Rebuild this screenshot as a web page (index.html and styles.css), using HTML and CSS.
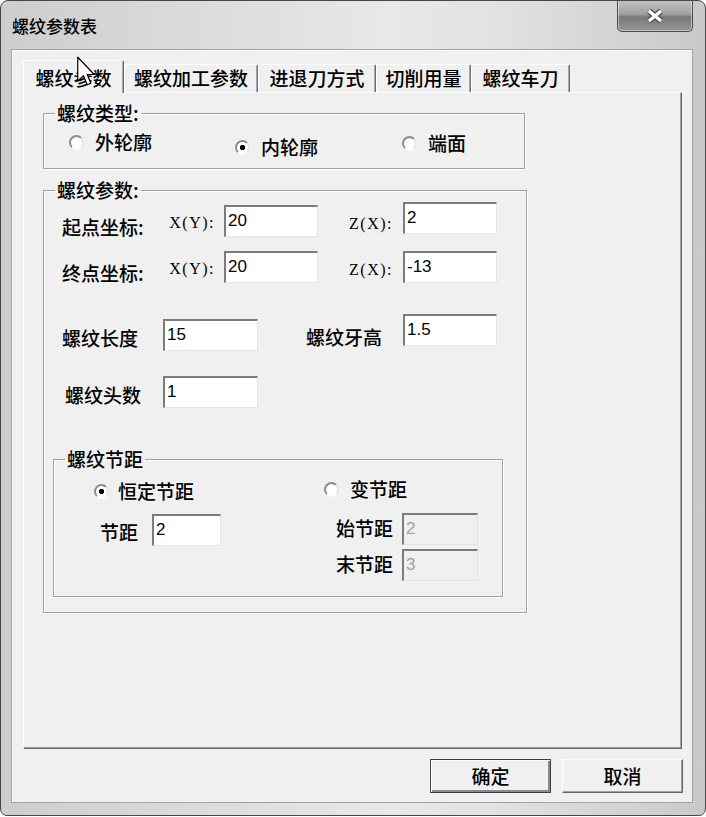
FILE: index.html
```html
<!DOCTYPE html>
<html lang="zh-CN">
<head>
    <meta charset="UTF-8">
    <title>螺纹参数表</title>
    <link rel="stylesheet" href="styles.css">
</head>
<body>
<div class="window">
    <div class="titlebar">
        <span class="title">螺纹参数表</span>
        <button class="close-btn" type="button" aria-label="关闭">
            <svg width="20" height="16" viewBox="0 0 20 16">
                <path d="M4 3 L16 13 M16 3 L4 13" stroke="#4a4a4a" stroke-width="6" fill="none"/>
                <path d="M4 3 L16 13 M16 3 L4 13" stroke="#fff" stroke-width="3.4" fill="none"/>
            </svg>
        </button>
    </div>
    <div class="client">
        <div class="tabs">
            <div class="tab active t1">螺纹参数</div>
            <div class="tab t2">螺纹加工参数</div>
            <div class="tab t3">进退刀方式</div>
            <div class="tab t4">切削用量</div>
            <div class="tab t5">螺纹车刀</div>
        </div>
        <div class="page">
            <fieldset class="group g-type">
                <legend>螺纹类型:</legend>
                <div class="type-opts">
                    <label class="opt o-out"><input type="radio" name="kind"> 外轮廓</label>
                    <label class="opt o-in"><input type="radio" name="kind" checked> 内轮廓</label>
                    <label class="opt o-end"><input type="radio" name="kind"> 端面</label>
                </div>
            </fieldset>

            <fieldset class="group g-param">
                <legend>螺纹参数:</legend>
                <div class="row coord-row first">
                    <span class="lbl">起点坐标:</span>
                    <span class="axis">X(Y):</span>
                    <input class="field" type="text" value="20">
                    <span class="axis zaxis">Z(X):</span>
                    <input class="field zfield up" type="text" value="2">
                </div>
                <div class="row coord-row second">
                    <span class="lbl">终点坐标:</span>
                    <span class="axis">X(Y):</span>
                    <input class="field" type="text" value="20">
                    <span class="axis zaxis">Z(X):</span>
                    <input class="field zfield" type="text" value="-13">
                </div>
                <div class="row size-row">
                    <span class="lbl len-lbl">螺纹长度</span>
                    <input class="field len-field" type="text" value="15">
                    <span class="lbl depth-lbl">螺纹牙高</span>
                    <input class="field" type="text" value="1.5">
                </div>
                <div class="row heads-row">
                    <span class="lbl heads-lbl">螺纹头数</span>
                    <input class="field" type="text" value="1">
                </div>

                <fieldset class="group g-pitch">
                    <legend>螺纹节距</legend>
                    <div class="pitch-cols">
                        <div class="pitch-col left">
                            <label class="opt o-fixed"><input type="radio" name="pitch" checked> 恒定节距</label>
                            <div class="pitch-row fixed-row">
                                <span class="plbl short">节距</span>
                                <input class="field small" type="text" value="2">
                            </div>
                        </div>
                        <div class="pitch-col right">
                            <label class="opt o-var"><input type="radio" name="pitch"> 变节距</label>
                            <div class="pitch-row var-row">
                                <span class="plbl">始节距</span>
                                <input class="field small wide" type="text" value="2" disabled>
                            </div>
                            <div class="pitch-row var-row last">
                                <span class="plbl">末节距</span>
                                <input class="field small wide" type="text" value="3" disabled>
                            </div>
                        </div>
                    </div>
                </fieldset>
            </fieldset>
        </div>
        <div class="actions">
            <button class="btn default" type="button">确定</button>
            <button class="btn" type="button">取消</button>
        </div>
    </div>
    <svg class="cursor" width="18" height="31" viewBox="0 0 12 20">
        <polygon points="0.5,0.5 0.5,16.5 4.3,12.8 6.8,18.8 9.2,17.8 6.8,12 11.5,12" fill="#fff" stroke="#000" stroke-width="0.8" stroke-linejoin="round"/>
    </svg>
</div>
</body>
</html>
```

FILE: styles.css
```css
body {
    margin: 0;
    background: #fff;
    font-family: "Noto Sans CJK SC", sans-serif;
    font-size: 19px;
    font-weight: 500;
    color: #000;
}
.window {
    position: relative;
    width: 706px;
    height: 816px;
    box-sizing: border-box;
    border: 1px solid #474747;
    border-radius: 8px 8px 7px 7px;
    padding: 0 12px 12px 10px;
    background: linear-gradient(to right, #cdcdcd, #dadada 25%, #e8e8e8 55%, #e2e2e2 70%, #d2d2d2 90%, #c9c9c9);
    display: flex;
    flex-direction: column;
    overflow: hidden;
}
.titlebar {
    height: 48px;
    flex-shrink: 0;
    display: flex;
    justify-content: space-between;
    align-items: flex-start;
}
.title {
    margin: 15px 0 0 1px;
    font-size: 17px;
    line-height: 20px;
}
.close-btn {
    width: 76px;
    height: 32px;
    margin: -1px 0 0 0;
    padding: 0;
    border: 1px solid #4c4c4c;
    border-top: none;
    border-radius: 0 0 5px 5px;
    background: linear-gradient(to bottom, #c4c4c4, #a0a0a0 45%, #787878 55%, #959595);
    box-shadow: inset 0 0 0 1px rgba(255,255,255,0.45);
    display: flex;
    align-items: center;
    justify-content: center;
}
.client {
    flex: 1;
    background: #f0f0f0;
    border: 1px solid #a3a3a3;
    box-shadow: inset 1px 1px 0 #fafafa;
    display: flex;
    flex-direction: column;
}
.tabs {
    display: flex;
    align-items: flex-end;
    height: 32px;
    margin: 10px 0 0 11px;
    position: relative;
    z-index: 1;
}
.tab {
    height: 28px;
    box-sizing: border-box;
    border-top: 1px solid #fff;
    border-left: 1px solid #fff;
    border-right: 1px solid #6e6e6e;
    box-shadow: inset -1px 0 0 #a8a8a8;
    border-radius: 2px 2px 0 0;
    text-align: center;
    line-height: 26px;
    background: #f0f0f0;
}
.tab.active {
    height: 33px;
    margin-bottom: -1px;
    padding-top: 4px;
}
.t1 { width: 101px; }
.t2 { width: 134px; }
.t3 { width: 118px; }
.t4 { width: 95px; }
.t5 { width: 99px; }
.page {
    flex: 1;
    margin: 0 11px 0 11px;
    border-top: 1px solid #fff;
    border-left: 1px solid #fff;
    border-right: 1px solid #a0a0a0;
    border-bottom: 1px solid #a0a0a0;
    box-shadow: 1px 1px 0 #696969;
}

/* group boxes */
.group {
    margin: 0;
    padding: 0;
    min-width: 0;
    box-sizing: border-box;
    border: 1px solid #a0a0a0;
    box-shadow: 1px 1px 0 #fff, inset 1px 1px 0 #fff;
}
.group legend {
    padding: 0 2px;
    margin-left: 11px;
    line-height: 20px;
    font-size: 19px;
}
.g-type {
    width: 482px;
    margin: 10px 0 0 19px;
}
.g-param {
    width: 484px;
    margin: 11px 0 0 19px;
    padding-bottom: 15px;
}
.g-pitch {
    width: 450px;
    margin: 41px 0 0 9px;
    padding-bottom: 15px;
}

/* radios */
.opt {
    display: flex;
    align-items: center;
    gap: 11px;
    line-height: 20px;
}
.opt input {
    appearance: none;
    -webkit-appearance: none;
    width: 15px;
    height: 15px;
    margin: 0;
    box-sizing: border-box;
    border-radius: 50%;
    border: 2px solid;
    border-color: #8c8c8c #e6e6e6 #fbfbfb #8c8c8c;
    background: radial-gradient(circle at 60% 60%, #fff 55%, #e8e8e8);
}
.opt input:checked {
    background: radial-gradient(circle, #000 0 2.4px, #fff 3px);
}
.type-opts {
    display: grid;
    grid-template-columns: 166px 167px auto;
    align-items: start;
    padding-left: 25px;
    height: 45px;
}
.o-out { margin-top: 9px; }
.o-in { margin-top: 14px; }
.o-end { margin-top: 10px; }

/* parameter rows */
.row {
    display: flex;
    align-items: flex-start;
    padding-left: 18px;
}
.lbl {
    line-height: 20px;
}
.coord-row .lbl {
    width: 104px;
    margin-top: 12px;
}
.coord-row.first { margin-top: 5px; }
.coord-row.second { margin-top: 14px; }
.axis {
    width: 58px;
    box-sizing: border-box;
    padding-right: 9px;
    text-align: right;
    font-family: "Liberation Serif", serif;
    font-size: 16px;
    font-weight: 400;
    letter-spacing: 1.5px;
    line-height: 18px;
    margin-top: 9px;
}
.axis.zaxis {
    width: 85px;
    padding-right: 10px;
    margin-top: 10px;
}
.field {
    width: 94px;
    height: 32px;
    box-sizing: border-box;
    margin: 0;
    padding: 0 2px 2px 2px;
    border-style: solid;
    border-width: 2px 1px 1px 2px;
    border-color: #7c7c7c #e4e4e4 #e4e4e4 #7c7c7c;
    background: #fff;
    font-family: "Liberation Sans", sans-serif;
    font-size: 17px;
    color: #000;
    outline: none;
}
.zfield.up { margin-top: -3px; }
.size-row { margin-top: 31px; }
.len-lbl {
    width: 101px;
    margin-top: 14px;
}
.len-field {
    width: 95px;
    margin-top: 5px;
}
.depth-lbl {
    width: 145px;
    box-sizing: border-box;
    padding-right: 21px;
    text-align: right;
    margin-top: 13px;
}
.heads-row {
    margin-top: 25px;
    padding-left: 21px;
}
.heads-lbl {
    width: 98px;
    margin-top: 9px;
}
.heads-row .field { width: 95px; }

/* pitch group */
.pitch-cols {
    display: flex;
}
.pitch-col.left { width: 266px; }
.o-fixed {
    margin: 12px 0 0 40px;
    gap: 9px;
}
.o-var {
    margin: 10px 0 0 4px;
}
.pitch-row {
    display: flex;
    align-items: flex-start;
}
.fixed-row {
    margin: 13px 0 0 46px;
}
.var-row {
    margin: 14px 0 0 16px;
}
.var-row.last { margin-top: 4px; }
.plbl {
    width: 66px;
    line-height: 20px;
    margin-top: 5px;
}
.plbl.short {
    width: 52px;
    margin-top: 8px;
}
.field.small { width: 69px; }
.field.wide { width: 76px; }
.field:disabled {
    background: #f0f0f0;
    color: #a0a0a0;
}

/* dialog buttons */
.actions {
    display: flex;
    justify-content: flex-end;
    gap: 11px;
    margin: 11px 9px 9px 0;
}
.btn {
    width: 121px;
    height: 34px;
    padding: 0;
    background: #f0f0f0;
    font-family: "Noto Sans CJK SC", sans-serif;
    font-size: 19px;
    font-weight: 500;
    line-height: 20px;
    color: #000;
    border: 1px solid;
    border-color: #fdfdfd #646464 #646464 #fdfdfd;
    box-shadow: inset -1px -1px 0 #a0a0a0;
}
.btn.default {
    border: 1px solid #3e3e3e;
    box-shadow: inset 1px 1px 0 #fff, inset -2px -2px 0 #8a8a8a;
}
.cursor {
    position: absolute;
    left: 76px;
    top: 55px;
    z-index: 5;
}
```
